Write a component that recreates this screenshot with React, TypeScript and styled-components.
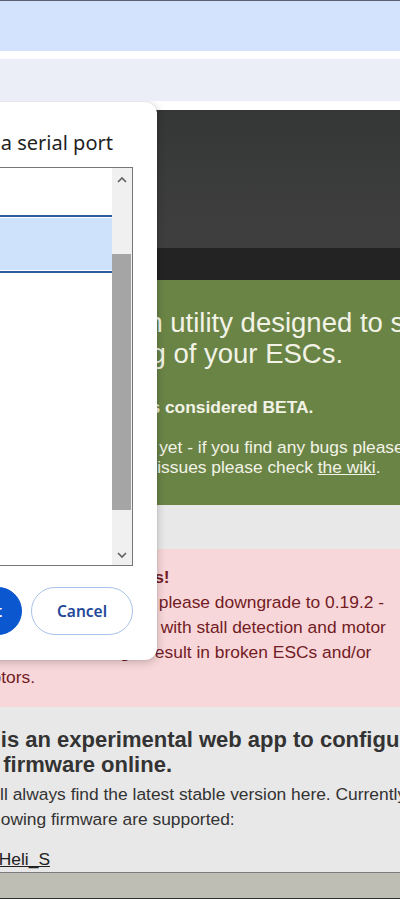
import React from "react";
import styled, { createGlobalStyle } from "styled-components";

const GlobalStyle = createGlobalStyle`
  html, body {
    margin: 0;
    padding: 0;
  }
  body {
    width: 400px;
    height: 900px;
    overflow: hidden;
    background: #fff;
    font-family: "Liberation Sans", Arial, sans-serif;
  }
`;

const Window = styled.div`
  display: flex;
  flex-direction: column;
  width: 400px;
  height: 900px;
  overflow: hidden;
`;

const TabStrip = styled.div`
  height: 50px;
  border-top: 1px solid #596070;
  background: #d3e3fd;
`;

const Toolbar = styled.div`
  height: 8px;
  background: #fff;
`;

const BookmarkBar = styled.div`
  height: 42px;
  background: #ebeef6;
`;

const Viewport = styled.div`
  position: relative;
  flex: 1;
  overflow: hidden;
  padding-top: 8.5px;
  background: #fff;
`;

// the page is wider than the window, it gets cut on both sides
const Page = styled.div`
  display: flex;
  flex-direction: column;
  width: 760px;
  margin-left: -70px;
`;

const Header = styled.header`
  height: 138px;
  background: linear-gradient(#353736, #3f3f3f);
`;

const Nav = styled.nav`
  height: 32.5px;
  background: #232323;
`;

const Welcome = styled.section`
  background: #6a8446;
  color: #f2f3e6;
  padding: 26.5px 0 28px 115px;
  white-space: nowrap;
`;

const Lead = styled.h1`
  margin: 0;
  font-size: 27.5px;
  font-weight: 400;
  line-height: 31px;
`;

const Note = styled.p<{ $bold?: boolean; $gap: number }>`
  margin: ${(p) => p.$gap}px 0 0;
  padding-left: 2px;
  font-size: 17.4px;
  line-height: 20px;
  font-weight: ${(p) => (p.$bold ? 700 : 400)};
`;

const TextLink = styled.a`
  color: inherit;
  text-decoration: underline;
`;

const Spacer = styled.div`
  height: 43.5px;
  background: #e8e8e8;
`;

const Alert = styled.div`
  background: #f8d7da;
  color: #721c24;
  padding: 16.5px 0 16.5px 47px;
  font-size: 17.4px;
  line-height: 25px;
  white-space: nowrap;
`;

const AlertTitle = styled.div`
  font-weight: 700;
`;

const Intro = styled.section`
  background: #e8e8e8;
  color: #333;
  padding: 20px 0 0 19.5px;
  border-bottom: 1px solid #7b7b7b;
  white-space: nowrap;
`;

const IntroTitle = styled.h2`
  margin: 0;
  font-size: 22px;
  line-height: 25px;
  font-weight: 700;
`;

const IntroText = styled.p`
  margin: 5px 0 0;
  font-size: 17.4px;
  line-height: 25px;
`;

const FirmwareList = styled.ul`
  list-style: none;
  margin: 15px 0 0;
  padding: 0 0 0 28px;
  font-size: 17.4px;
  line-height: 25px;
`;

const FirmwareLink = styled.a`
  color: #222;
  text-decoration: underline;
`;

const Footer = styled.footer`
  height: 25px;
  background: #bebeb5;
  border-bottom: 1px solid #2f2f2f;
`;

/* chrome serial port chooser */
const Dialog = styled.div`
  position: absolute;
  top: 1px;
  left: -483px;
  width: 640px;
  box-sizing: border-box;
  display: flex;
  flex-direction: column;
  padding: 28px 24px 25px;
  background: #fff;
  border-radius: 12px;
  box-shadow: 0 2px 10px rgba(0, 0, 0, 0.22), 0 0 2px rgba(0, 0, 0, 0.12);
  font-family: "Noto Sans", "Open Sans", sans-serif;
`;

const DialogTitle = styled.div`
  font-size: 20px;
  line-height: 26px;
  color: #1f1f1f;
  text-align: right;
  padding-right: 20px;
  white-space: nowrap;
`;

const PortList = styled.div`
  display: flex;
  height: 399px;
  margin-top: 11px;
  box-sizing: border-box;
  border: 1px solid #767676;
`;

const Ports = styled.div`
  flex: 1;
  display: flex;
  flex-direction: column;
`;

const Port = styled.div<{ $selected?: boolean }>`
  height: ${(p) => (p.$selected ? 58 : 47)}px;
  box-sizing: border-box;
  background: ${(p) => (p.$selected ? "#cfe2fc" : "#fff")};
  border-top: ${(p) => (p.$selected ? "2px solid #2c5a9c" : "none")};
  border-bottom: ${(p) => (p.$selected ? "2px solid #2c5a9c" : "none")};
  box-shadow: ${(p) => (p.$selected ? "inset 0 1px 0 #fff, inset 0 -1px 0 #fff" : "none")};
`;

const Scrollbar = styled.div`
  width: 20px;
  display: flex;
  flex-direction: column;
  background: #f0f0f0;
`;

const ArrowBox = styled.div<{ $h: number }>`
  height: ${(p) => p.$h}px;
  display: flex;
  align-items: center;
  justify-content: center;
`;

const Track = styled.div`
  flex: 1;
`;

const Thumb = styled.div`
  margin: 62px 1px 0 0;
  height: 256px;
  background: #a5a5a5;
`;

const Actions = styled.div`
  display: flex;
  justify-content: flex-end;
  gap: 9px;
  margin-top: 21px;
`;

const PillButton = styled.button<{ $primary?: boolean }>`
  height: 48px;
  box-sizing: border-box;
  border-radius: 24px;
  font-family: inherit;
  font-size: 15.5px;
  font-weight: 600;
  cursor: pointer;
  padding: ${(p) => (p.$primary ? "0 19px 0 30px" : "0")};
  width: ${(p) => (p.$primary ? "auto" : "102px")};
  background: ${(p) => (p.$primary ? "#0b57d0" : "#fff")};
  color: ${(p) => (p.$primary ? "#fff" : "#24489a")};
  border: 1px solid ${(p) => (p.$primary ? "#0b57d0" : "#a8c3ea")};
`;

function Chevron({ down }: { down?: boolean }) {
  return (
    <svg width="10" height="6" viewBox="0 0 10 6">
      <path
        d={down ? "M1 1 L5 5 L9 1" : "M1 5 L5 1 L9 5"}
        fill="none"
        stroke="#636363"
        strokeWidth="1.7"
      />
    </svg>
  );
}

export default function App() {
  return (
    <>
      <GlobalStyle />
      <Window>
        <TabStrip />
        <Toolbar />
        <BookmarkBar />
        <Viewport>
          <Page>
            <Header />
            <Nav />
            <Welcome>
              <Lead>
                This is an utility designed to simplify the configuration and
                <br />
                the tuning of your ESCs.
              </Lead>
              <Note $bold $gap={28.4}>The project is considered BETA.</Note>
              <Note $gap={20.5}>
                It is not stable yet - if you find any bugs please report them.
                <br />
                If you run into issues please check <TextLink href="#">the wiki</TextLink>.
              </Note>
            </Welcome>
            <Spacer />
            <Alert>
              <AlertTitle>Warning Bluejay users!</AlertTitle>
              If you are using 0.20.0, please downgrade to 0.19.2 -
              <br />
              there are known issues with stall detection and motor
              <br />
              behavior, which might result in broken ESCs and/or
              <br />
              motors.
            </Alert>
            <Intro>
              <IntroTitle>
                This is an experimental web app to configure and update
                <br />
                your firmware online.
              </IntroTitle>
              <IntroText>
                You will always find the latest stable version here. Currently
                <br />
                the following firmware are supported:
              </IntroText>
              <FirmwareList>
                <li>
                  <FirmwareLink href="#">BLHeli_S</FirmwareLink>
                </li>
              </FirmwareList>
            </Intro>
            <Footer />
          </Page>

          <Dialog>
            <DialogTitle>esc-configurator.com wants to connect to a serial port</DialogTitle>
            <PortList>
              <Ports>
                <Port />
                <Port $selected />
              </Ports>
              <Scrollbar>
                <ArrowBox $h={24}>
                  <Chevron />
                </ArrowBox>
                <Track>
                  <Thumb />
                </Track>
                <ArrowBox $h={20}>
                  <Chevron down />
                </ArrowBox>
              </Scrollbar>
            </PortList>
            <Actions>
              <PillButton $primary>Connect</PillButton>
              <PillButton>Cancel</PillButton>
            </Actions>
          </Dialog>
        </Viewport>
      </Window>
    </>
  );
}
